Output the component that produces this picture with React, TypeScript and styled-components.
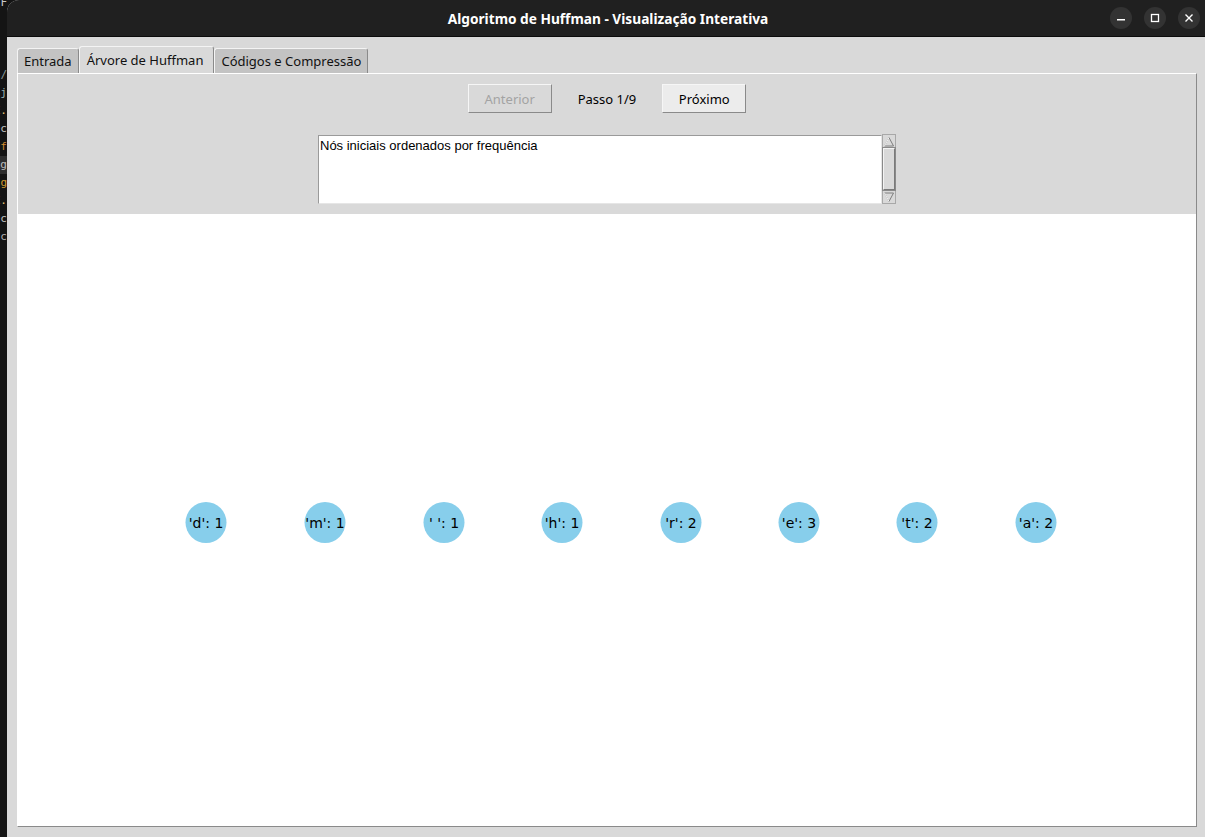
import React from 'react';
import styled, { createGlobalStyle } from 'styled-components';

const GlobalStyle = createGlobalStyle`
  html, body { margin: 0; padding: 0; background: #121212; overflow: hidden; }
  #root { width: 1205px; height: 837px; }
`;

const Screen = styled.div`
  display: flex;
  width: 1205px;
  height: 837px;
  background: #141414;
`;

const Backdrop = styled.div`
  width: 7px;
  flex-shrink: 0;
  display: flex;
  flex-direction: column;
  overflow: hidden;
  margin-top: -6px;
  font: 11px "DejaVu Sans Mono", monospace;
`;

const TermLine = styled.div<{ $c: string; $bg?: string }>`
  height: 18px;
  line-height: 18px;
  display: flex;
  justify-content: flex-end;
  white-space: nowrap;
  color: ${(p) => p.$c};
  background: ${(p) => p.$bg || 'transparent'};
`;

const Window = styled.div`
  flex: 1;
  display: flex;
  flex-direction: column;
  border-top-left-radius: 12px;
  overflow: hidden;
  background: #d9d9d9;
`;

const TitleBar = styled.header`
  height: 36px;
  flex-shrink: 0;
  background: #202020;
  border-bottom: 1px solid #0b0b0b;
  display: grid;
  grid-template-columns: 1fr auto 1fr;
  align-items: center;
`;

const Title = styled.div`
  grid-column: 2;
  color: #ffffff;
  font: 700 13.7px "Noto Sans", sans-serif;
  margin-left: 4px;
`;

const Controls = styled.div`
  grid-column: 3;
  justify-self: end;
  display: flex;
  gap: 12px;
  margin-right: 5px;
`;

const CtrlButton = styled.div`
  width: 22px;
  height: 22px;
  border-radius: 50%;
  background: #333333;
  display: flex;
  align-items: center;
  justify-content: center;
`;

const Content = styled.div`
  flex: 1;
  display: flex;
  flex-direction: column;
  padding: 9px 8px 10px 10px;
  min-height: 0;
`;

const TabRow = styled.div`
  height: 27px;
  display: flex;
  align-items: flex-end;
`;

const Tab = styled.div<{ $active?: boolean; $pad: string }>`
  box-sizing: border-box;
  height: ${(p) => (p.$active ? 27 : 25)}px;
  padding: ${(p) => p.$pad};
  display: flex;
  align-items: center;
  background: ${(p) => (p.$active ? '#d9d9d9' : '#c3c3c3')};
  border-top: 1px solid #f4f4f4;
  border-left: 1px solid #f4f4f4;
  border-right: 1px solid #8a8a8a;
  border-radius: 3px 3px 0 0;
  color: #111;
  font: 400 13px "Noto Sans", sans-serif;
  white-space: nowrap;
`;

const Panel = styled.div`
  flex: 1;
  display: flex;
  flex-direction: column;
  border-top: 1px solid #ffffff;
  border-left: 1px solid #ffffff;
  border-right: 1px solid #8a8a8a;
  border-bottom: 1px solid #8a8a8a;
  min-height: 0;
`;

const Toolbar = styled.div`
  height: 140px;
  flex-shrink: 0;
  display: flex;
  flex-direction: column;
  align-items: center;
  padding-top: 10px;
  box-sizing: border-box;
`;

const ButtonRow = styled.div`
  display: flex;
  align-items: center;
  gap: 26px;
`;

const Button = styled.button<{ $disabled?: boolean }>`
  box-sizing: border-box;
  width: 84px;
  height: 29px;
  margin: 0;
  padding: 0;
  background: ${(p) => (p.$disabled ? '#d9d9d9' : '#ececec')};
  color: ${(p) => (p.$disabled ? '#a3a3a3' : '#000')};
  border-top: 1px solid #f6f6f6;
  border-left: 1px solid #f6f6f6;
  border-right: 1px solid #8a8a8a;
  border-bottom: 1px solid #8a8a8a;
  font: 400 13px "Noto Sans", sans-serif;
`;

const StepLabel = styled.span`
  font: 400 13px "Noto Sans", sans-serif;
  color: #000;
`;

const TextRow = styled.div`
  display: flex;
  margin-top: 21px;
`;

const TextBox = styled.div`
  box-sizing: border-box;
  width: 564px;
  height: 69px;
  margin-top: 1px;
  background: #ffffff;
  border-top: 1px solid #9a9a9a;
  border-left: 1px solid #9a9a9a;
  border-bottom: 1px solid #e6e6e6;
  border-right: 1px solid #e6e6e6;
  padding: 2px 1px;
  font: 13px "Liberation Sans", Arial, sans-serif;
  line-height: 16px;
  color: #000;
`;

const Scrollbar = styled.div`
  box-sizing: border-box;
  width: 14px;
  height: 70px;
  display: flex;
  flex-direction: column;
  background: #cfcfcf;
  border: 1px solid #a8a8a8;
`;

const ArrowBox = styled.div`
  height: 12px;
  display: flex;
  align-items: center;
  justify-content: center;
  background: #d9d9d9;
`;

const Thumb = styled.div`
  flex: 1;
  margin: 1px 0;
  background: #d9d9d9;
  border-top: 1px solid #f4f4f4;
  border-left: 1px solid #f4f4f4;
  border-right: 1px solid #7a7a7a;
  border-bottom: 1px solid #7a7a7a;
  box-shadow: 0 0 0 1px #8a8a8a;
`;

const Canvas = styled.div`
  flex: 1;
  background: #ffffff;
  min-height: 0;
`;

const NodeLabel = styled.text`
  font: 14px "DejaVu Sans", sans-serif;
  fill: #000;
  white-space: pre;
`;

const termLines: { t: string; c: string; bg?: string }[] = [
  { t: 'F', c: '#c8c8c8' },
  { t: '', c: '#fff' },
  { t: '', c: '#fff' },
  { t: '', c: '#fff' },
  { t: '/', c: '#8a9a9a' },
  { t: 'ij', c: '#9ab0b0' },
  { t: 'E.', c: '#e0c070' },
  { t: 'ec', c: '#c0c0c0' },
  { t: 'ff', c: '#d08a30' },
  { t: 'ng', c: '#bcbcbc', bg: '#2e2e2e' },
  { t: 'g', c: '#d09a30' },
  { t: 'E.', c: '#e0c070' },
  { t: 'ec', c: '#c0c0c0' },
  { t: 'nc', c: '#b0b0b0' },
];

const nodes = [
  { x: 188, label: "'d': 1" },
  { x: 307, label: "'m': 1" },
  { x: 426, label: "' ': 1" },
  { x: 544, label: "'h': 1" },
  { x: 663, label: "'r': 2" },
  { x: 781, label: "'e': 3" },
  { x: 899, label: "'t': 2" },
  { x: 1018, label: "'a': 2" },
];

export default function App() {
  return (
    <>
      <GlobalStyle />
      <Screen>
        <Backdrop>
          {termLines.map((l, i) => (
            <TermLine key={i} $c={l.c} $bg={l.bg}>
              {l.t}
            </TermLine>
          ))}
        </Backdrop>
        <Window>
          <TitleBar>
            <Title>Algoritmo de Huffman - Visualização Interativa</Title>
            <Controls>
              <CtrlButton>
                <svg width="10" height="10" viewBox="0 0 10 10">
                  <rect x="1" y="6" width="8" height="1.5" fill="#fff" />
                </svg>
              </CtrlButton>
              <CtrlButton>
                <svg width="10" height="10" viewBox="0 0 10 10">
                  <rect x="1.5" y="1.5" width="7" height="7" fill="none" stroke="#fff" strokeWidth="1.3" />
                </svg>
              </CtrlButton>
              <CtrlButton>
                <svg width="10" height="10" viewBox="0 0 10 10">
                  <path d="M1.5 1.5 L8.5 8.5 M8.5 1.5 L1.5 8.5" stroke="#fff" strokeWidth="1.4" />
                </svg>
              </CtrlButton>
            </Controls>
          </TitleBar>
          <Content>
            <TabRow>
              <Tab $pad="0 6px 0 6px">Entrada</Tab>
              <Tab $active $pad="0 10px 0 7px">Árvore de Huffman</Tab>
              <Tab $pad="0 6px 0 6px">Códigos e Compressão</Tab>
            </TabRow>
            <Panel>
              <Toolbar>
                <ButtonRow>
                  <Button $disabled disabled>Anterior</Button>
                  <StepLabel>Passo 1/9</StepLabel>
                  <Button>Próximo</Button>
                </ButtonRow>
                <TextRow>
                  <TextBox>Nós iniciais ordenados por frequência</TextBox>
                  <Scrollbar>
                    <ArrowBox>
                      <svg width="12" height="11" viewBox="0 0 12 11">
                        <polygon points="6,1.5 10.5,10 1.5,10" fill="#d9d9d9" stroke="#7e7e7e" strokeWidth="1" />
                        <line x1="6" y1="1.5" x2="1.5" y2="10" stroke="#f6f6f6" strokeWidth="1" />
                      </svg>
                    </ArrowBox>
                    <Thumb />
                    <ArrowBox>
                      <svg width="12" height="11" viewBox="0 0 12 11">
                        <polygon points="1.5,1 10.5,1 6,9.5" fill="#d9d9d9" stroke="#7e7e7e" strokeWidth="1" />
                        <line x1="1.5" y1="1" x2="6" y2="9.5" stroke="#f6f6f6" strokeWidth="1" />
                      </svg>
                    </ArrowBox>
                  </Scrollbar>
                </TextRow>
              </Toolbar>
              <Canvas>
                <svg width="100%" height="100%" viewBox="0 0 1178 612" preserveAspectRatio="xMinYMin meet">
                  {nodes.map((n) => (
                    <g key={n.x}>
                      <circle cx={n.x} cy={308.5} r={20.5} fill="#87ceeb" />
                      <NodeLabel x={n.x} y={313.5} textAnchor="middle">
                        {n.label}
                      </NodeLabel>
                    </g>
                  ))}
                </svg>
              </Canvas>
            </Panel>
          </Content>
        </Window>
      </Screen>
    </>
  );
}
